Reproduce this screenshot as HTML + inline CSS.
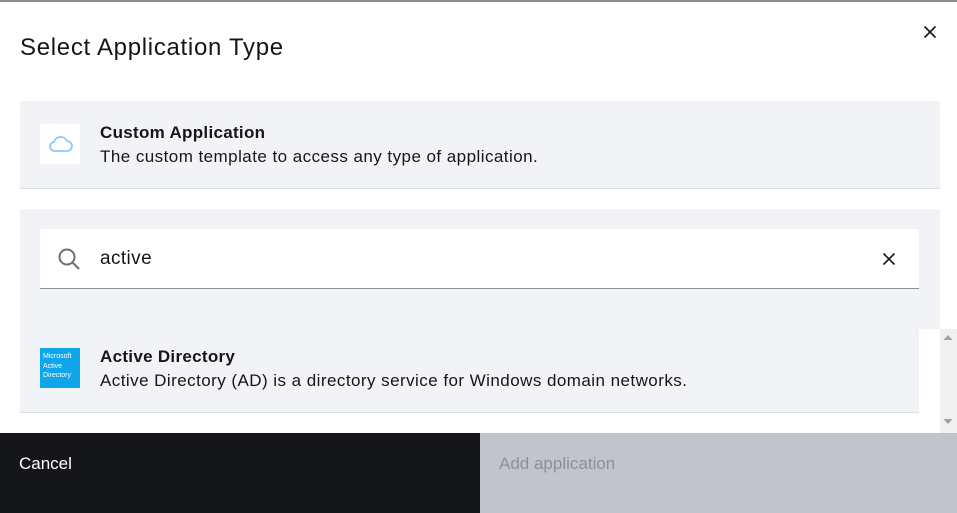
<!DOCTYPE html>
<html><head><meta charset="utf-8"><style>
*{margin:0;padding:0;box-sizing:border-box}
body{width:957px;height:513px;overflow:hidden;background:#fff;font-family:"Liberation Sans",sans-serif;color:#161616;position:relative}
.abs{position:absolute}
.t{font-size:17px;letter-spacing:0.45px;white-space:nowrap}
.b{font-weight:bold;letter-spacing:0.3px}
</style></head><body>
<div class="abs" style="left:0;top:0;width:957px;height:2px;background:#8d8d8d"></div>
<div class="abs" style="left:20px;top:34px;font-size:24px;letter-spacing:0.7px">Select Application Type</div>
<svg class="abs" style="left:923px;top:25px" width="14" height="14" viewBox="0 0 14 14"><path d="M1.5 1.5L12.5 12.5M12.5 1.5L1.5 12.5" stroke="#161616" stroke-width="1.6"/></svg>

<div class="abs" style="left:20px;top:101px;width:920px;height:88px;background:#f2f3f7;border-bottom:1px solid #dde0e4"></div>
<div class="abs" style="left:40px;top:124px;width:40px;height:40px;background:#fff"></div>
<svg class="abs" style="left:47px;top:134px" width="28" height="20" viewBox="0 0 28 20"><path d="M8 17H20a5 5 0 0 0 0-10a7 7 0 0 0-13 1a4.5 4.5 0 0 0 1 9z" fill="none" stroke="#8cc8f5" stroke-width="1.8"/></svg>
<div class="abs t b" style="left:100px;top:123px">Custom Application</div>
<div class="abs t" style="left:100px;top:147px">The custom template to access any type of application.</div>

<div class="abs" style="left:20px;top:209px;width:920px;height:120px;background:#f2f3f7"></div>
<div class="abs" style="left:40px;top:229px;width:879px;height:60px;background:#fff;border-bottom:1px solid #8d9096"></div>
<svg class="abs" style="left:57px;top:247px" width="26" height="26" viewBox="0 0 26 26"><circle cx="10" cy="10" r="7.5" fill="none" stroke="#6f6f6f" stroke-width="2"/><path d="M15.5 15.5L22 22" stroke="#6f6f6f" stroke-width="2"/></svg>
<div class="abs" style="left:100px;top:248px;font-size:19px;letter-spacing:0.4px">active</div>
<svg class="abs" style="left:882px;top:252px" width="14" height="14" viewBox="0 0 14 14"><path d="M1.5 1.5L12.5 12.5M12.5 1.5L1.5 12.5" stroke="#161616" stroke-width="1.6"/></svg>

<div class="abs" style="left:20px;top:329px;width:899px;height:84px;background:#f2f3f7;border-bottom:1px solid #dde0e4"></div>
<div class="abs" style="left:40px;top:348px;width:40px;height:40px;background:#0ea5ea;color:#fff;font-size:7px;line-height:9.5px;padding:4px 0 0 3px">Microsoft<br>Active<br>Directory</div>
<div class="abs t b" style="left:100px;top:347px">Active Directory</div>
<div class="abs t" style="left:100px;top:371px">Active Directory (AD) is a directory service for Windows domain networks.</div>

<div class="abs" style="left:940px;top:329px;width:17px;height:104px;background:#f0f0f0"></div>
<svg class="abs" style="left:941px;top:327px" width="14" height="106" viewBox="0 0 14 106"><path d="M2.5 13L7 8L11.5 13z" fill="#a3a3a3"/><path d="M2.5 92L7 97L11.5 92z" fill="#a3a3a3"/></svg>

<div class="abs" style="left:0;top:433px;width:480px;height:80px;background:#141619"></div>
<div class="abs t" style="left:19px;top:454px;color:#fff;letter-spacing:0">Cancel</div>
<div class="abs" style="left:480px;top:433px;width:477px;height:80px;background:#c1c5cb"></div>
<div class="abs t" style="left:499px;top:454px;color:#8d9096;letter-spacing:0">Add application</div>
</body></html>
